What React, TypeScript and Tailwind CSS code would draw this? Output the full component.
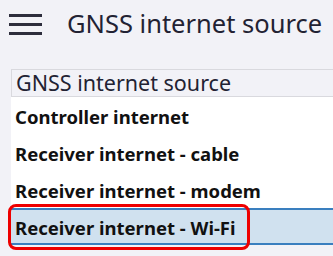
import React from 'react';

const rows = [
    "Controller internet",
    "Receiver internet - cable",
    "Receiver internet - modem",
    "Receiver internet - Wi-Fi",
];

export default function App() {
    const selected = 3;

    return (
        <div className="w-[333px] h-[256px] overflow-hidden bg-[#f2f2f7] font-['Noto_Sans',sans-serif] text-[#222233]">
            {/* Top bar */}
            <div className="h-[48px] flex items-center">
                <div className="ml-[9px] w-[33px] flex flex-col gap-[6px]">
                    <div className="h-[3px] bg-[#2d2d3c]" />
                    <div className="h-[3px] bg-[#2d2d3c]" />
                    <div className="h-[3px] bg-[#2d2d3c]" />
                </div>
                <div className="ml-[25px] text-[25.5px] leading-none whitespace-nowrap">GNSS internet source</div>
            </div>

            {/* List */}
            <div className="mt-[21px] ml-[11px] relative">
                <div className="h-[28px] border border-[#d9d9de] border-r-0 flex items-center pl-[4px] text-[21.5px] leading-none whitespace-nowrap">
                    GNSS internet source
                </div>
                <div className="bg-white">
                    {rows.map((r, i) => (
                        <div
                            key={r}
                            className={
                                i === selected
                                    ? "h-[37px] flex items-center pl-[4px] pt-[2px] bg-[#d0e1ef] border-t-2 border-b-2 border-[#3a7fbf] text-[18.5px] font-bold whitespace-nowrap text-[#111]"
                                    : "h-[37px] flex items-center pl-[4px] pt-[2px] text-[18.5px] font-bold whitespace-nowrap text-[#111]"
                            }
                        >
                            {r}
                        </div>
                    ))}
                </div>
                {/* Red highlight annotation */}
                <div className="absolute left-[-3px] top-[135px] w-[242px] h-[46px] border-[3px] border-[#ee0000] rounded-[8px]" />
            </div>
        </div>
    );
}
